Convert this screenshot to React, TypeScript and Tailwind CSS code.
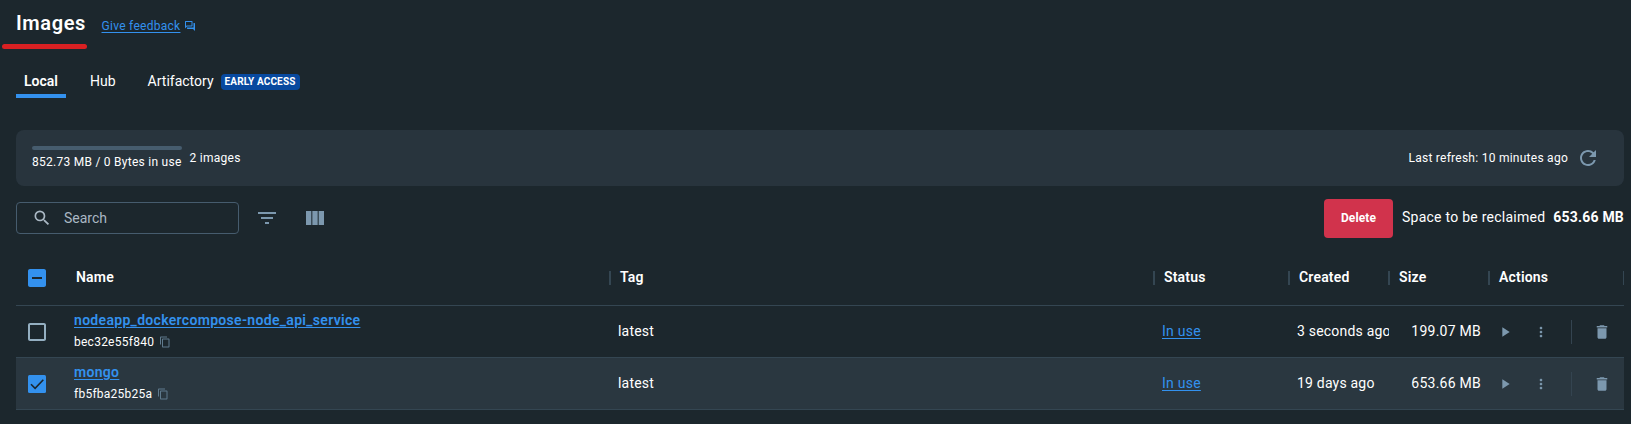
import type { ReactNode } from "react";
import {
  MdCheckBoxOutlineBlank,
  MdContentCopy,
  MdDelete,
  MdFilterList,
  MdIndeterminateCheckBox,
  MdMoreVert,
  MdPlayArrow,
  MdRefresh,
  MdSearch,
  MdViewColumn,
} from "react-icons/md";

type Image = {
  name: string;
  id: string;
  tag: string;
  created: string;
  size: string;
  selected: boolean;
};

const images: Image[] = [
  {
    name: "nodeapp_dockercompose-node_api_service",
    id: "bec32e55f840",
    tag: "latest",
    created: "3 seconds ago",
    size: "199.07 MB",
    selected: false,
  },
  {
    name: "mongo",
    id: "fb5fba25b25a",
    tag: "latest",
    created: "19 days ago",
    size: "653.66 MB",
    selected: true,
  },
];

const GRID = "grid grid-cols-[50px_544px_544px_135px_100px_100px_135px]";

function FeedbackIcon() {
  return (
    <svg viewBox="0 0 24 24" className="size-3 fill-[#3391ee]">
      <path fillRule="evenodd" d="M15 4v7H5.17L4 12.17V4h11m1-2H3c-.55 0-1 .45-1 1v14l4-4h10c.55 0 1-.45 1-1V3c0-.55-.45-1-1-1zm5 4h-2v9H6v2c0 .55.45 1 1 1h11l4 4V7c0-.55-.45-1-1-1z" />
    </svg>
  );
}

function CheckedIcon() {
  return (
    <svg viewBox="0 0 24 24" className="size-6">
      <rect x="3" y="3" width="18" height="18" rx="1.5" fill="#3391ee" />
      <path d="M6 12.3l4.1 4.1L18.3 7.8" fill="none" stroke="#1c262d" strokeWidth="1.6" />
    </svg>
  );
}

function HeaderCell({ children, last }: { children: ReactNode; last?: boolean }) {
  return (
    <div className="flex items-center justify-between pl-2.5 text-sm font-semibold tracking-[0.18px]">
      <span className="-mt-0.5">{children}</span>
      <span className={last ? "h-3.5 w-px bg-[#344652]" : "-mr-px h-3.5 w-0.5 bg-[#344652]"} />
    </div>
  );
}

function ImageRow({ image }: { image: Image }) {
  return (
    <div
      className={`${GRID} h-[52px] items-center border-b border-[#344652] text-sm tracking-[0.2px] ${
        image.selected ? "bg-[#2a3740]" : ""
      }`}
    >
      <div className="pl-[9px]">
        {image.selected ? <CheckedIcon /> : <MdCheckBoxOutlineBlank className="size-6 text-[#94afc1]" />}
      </div>
      <div className="flex flex-col pl-2">
        <a className="-mt-px font-semibold leading-5 tracking-[0.31px] text-[#3391ee] underline underline-offset-2">{image.name}</a>
        <div className="flex items-center gap-[5px] pt-[2px] text-xs leading-5 tracking-[0.25px]">
          <span>{image.id}</span>
          <MdContentCopy className="size-3 text-[#5f7a8d]" />
        </div>
      </div>
      <div className="-mt-0.5 pl-2">{image.tag}</div>
      <div className="-mt-0.5 pl-2">
        <a className="tracking-[0.25px] text-[#3391ee] underline underline-offset-2">In use</a>
      </div>
      <div className="-mt-0.5 overflow-hidden pl-2 whitespace-nowrap">{image.created}</div>
      <div className="-mt-0.5 pr-2 text-right tracking-[0.25px]">{image.size}</div>
      <div className="flex items-center pl-2 text-[#7c98ae]">
        <MdPlayArrow className="size-4" />
        <MdMoreVert className="ml-5 size-4" />
        <span className="ml-[22px] h-6 w-px bg-[#344450]" />
        <MdDelete className="ml-[21px] size-[18px]" />
      </div>
    </div>
  );
}

export default function App() {
  return (
    <div className="h-[424px] w-[1631px] overflow-hidden bg-[#1c272d] pl-4 font-[Roboto,sans-serif] text-white">
      <header className="flex h-11 items-center pt-px">
        <h1 className="w-[69px] text-xl font-semibold tracking-[0.6px]">Images</h1>
        <a className="mt-[7px] ml-[16.5px] flex items-center gap-1 text-xs tracking-[0.28px] text-[#3391ee]">
          <span className="underline underline-offset-2">Give feedback</span>
          <FeedbackIcon />
        </a>
      </header>
      <div className="-ml-3.5 h-[5px] w-[85px] rounded-full bg-[#d92022]" />

      <nav className="mt-[17px] flex h-8 text-sm">
        <div className="flex w-[50px] justify-center border-b-4 border-[#3391ee] pt-[5px] font-semibold leading-5">Local</div>
        <div className="ml-6 pt-[5px] leading-5">Hub</div>
        <div className="ml-8 flex items-start gap-[7px]">
          <span className="pt-[5px] leading-5">Artifactory</span>
          <span className="mt-2 w-[79px] rounded bg-[#08499f] text-center text-[10px] font-bold leading-4 tracking-[0.15px]">EARLY ACCESS</span>
        </div>
      </nav>

      <section className="mt-8 flex h-14 w-[1608px] items-center rounded-lg bg-[#28343d] px-4 text-xs tracking-[0.26px]">
        <div className="flex flex-col gap-1">
          <div className="h-1 rounded-sm bg-[#465c6e]" />
          <span className="leading-4">852.73 MB / 0 Bytes in use</span>
        </div>
        <span className="ml-2">2 images</span>
        <span className="ml-auto">Last refresh: 10 minutes ago</span>
        <MdRefresh className="mr-2 ml-2 size-6 text-[#7c98ae]" />
      </section>

      <section className="flex h-[65px] w-[1608px] items-center pb-[2px]">
        <div className="flex h-8 w-[223px] items-center rounded border border-[#465c6e] pl-[15px] text-sm text-[#aab8c4]">
          <MdSearch className="size-5" />
          <span className="ml-3">Search</span>
        </div>
        <MdFilterList className="ml-4 size-6 text-[#7c98ae]" />
        <MdViewColumn className="ml-6 size-6 text-[#7c98ae]" />
        <button className="mt-px ml-auto h-[39px] w-[69px] rounded bg-[#d1334c] text-xs font-bold tracking-[0.1px]">Delete</button>
        <span className="-mt-px ml-[9px] text-sm tracking-[0.25px]">Space to be reclaimed</span>
        <span className="-mt-px ml-2 text-sm font-bold tracking-[0.2px]">653.66 MB</span>
      </section>

      <main className="w-[1608px]">
        <div className={`${GRID} h-[55px] border-b border-[#344652]`}>
          <div className="flex items-center pl-[9px]">
            <MdIndeterminateCheckBox className="size-6 text-[#3391ee]" />
          </div>
          <HeaderCell>Name</HeaderCell>
          <HeaderCell>Tag</HeaderCell>
          <HeaderCell>Status</HeaderCell>
          <HeaderCell>Created</HeaderCell>
          <HeaderCell>Size</HeaderCell>
          <HeaderCell last>Actions</HeaderCell>
        </div>
        {images.map((image) => (
          <ImageRow key={image.id} image={image} />
        ))}
      </main>
    </div>
  );
}
